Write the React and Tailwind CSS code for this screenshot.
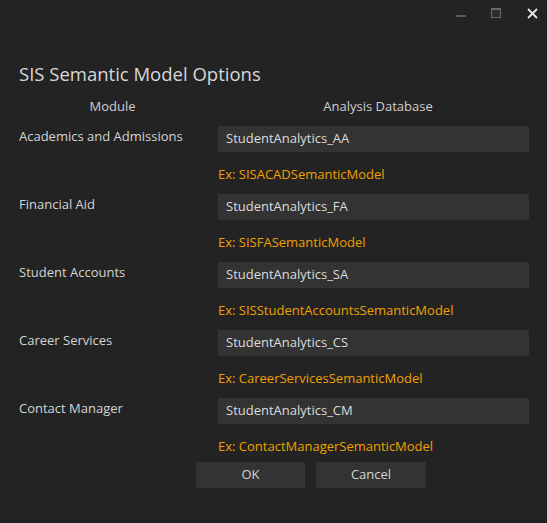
import React from "react";

const rows = [
  ["Academics and Admissions", "StudentAnalytics_AA", "Ex: SISACADSemanticModel"],
  ["Financial Aid", "StudentAnalytics_FA", "Ex: SISFASemanticModel"],
  ["Student Accounts", "StudentAnalytics_SA", "Ex: SISStudentAccountsSemanticModel"],
  ["Career Services", "StudentAnalytics_CS", "Ex: CareerServicesSemanticModel"],
  ["Contact Manager", "StudentAnalytics_CM", "Ex: ContactManagerSemanticModel"],
];

export default function App() {
  return (
    <div
      className="w-[547px] h-[523px] bg-[#232323] text-[#d4d4d4] flex flex-col overflow-hidden"
      style={{ fontFamily: '"Open Sans", "Noto Sans", sans-serif' }}
    >
      <div className="h-[30px] flex items-center justify-end">
        <div className="w-[35px] h-[30px] flex items-center justify-center">
          <div className="w-[10px] h-[2px] bg-[#5a5a5a] mt-[2px]" />
        </div>
        <div className="w-[35px] h-[30px] mr-[4px] flex items-center justify-center">
          <div className="w-[10px] h-[10px] border border-[#6a6a6a] border-t-2 bg-[#2c2c2c] -mt-[4px]" />
        </div>
        <div className="w-[30px] h-[30px] flex items-center justify-center">
          <svg width="11" height="11" viewBox="0 0 11 11" className="-mt-[4px]">
            <path d="M1 1 L10 10 M10 1 L1 10" stroke="#e6e6e6" strokeWidth="1.8" />
          </svg>
        </div>
      </div>
      <div className="pl-[19px] mt-[31px] text-[18.5px] leading-[26px] text-[#d8d8d8]">
        SIS Semantic Model Options
      </div>
      <div className="flex mt-[10px] h-[20px] items-center text-[13px] text-[#cfcfcf]">
        <div className="w-[225px] text-center">Module</div>
        <div className="w-[306px] text-center">Analysis Database</div>
      </div>
      <div className="flex flex-col mt-[9px]">
        {rows.map(([label, value, ex]) => (
          <div key={label} className="flex h-[68px]">
            <div className="w-[218px] pl-[19px] text-[13px] leading-[20px] text-[#d4d4d4]">
              {label}
            </div>
            <div className="flex flex-col">
              <div className="w-[311px] h-[26px] bg-[#333333] pl-[8px] flex items-center text-[13px] text-[#dcdcdc]">
                {value}
              </div>
              <div className="mt-[14px] text-[13px] leading-[16px] text-[#f0a000]">{ex}</div>
            </div>
          </div>
        ))}
      </div>
      <div className="flex gap-[11px] pl-[196px] mt-[-4px]">
        <div className="w-[109px] h-[26px] bg-[#333333] flex items-center justify-center text-[13px] text-[#d4d4d4]">
          OK
        </div>
        <div className="w-[110px] h-[26px] bg-[#333333] flex items-center justify-center text-[13px] text-[#d4d4d4]">
          Cancel
        </div>
      </div>
    </div>
  );
}
